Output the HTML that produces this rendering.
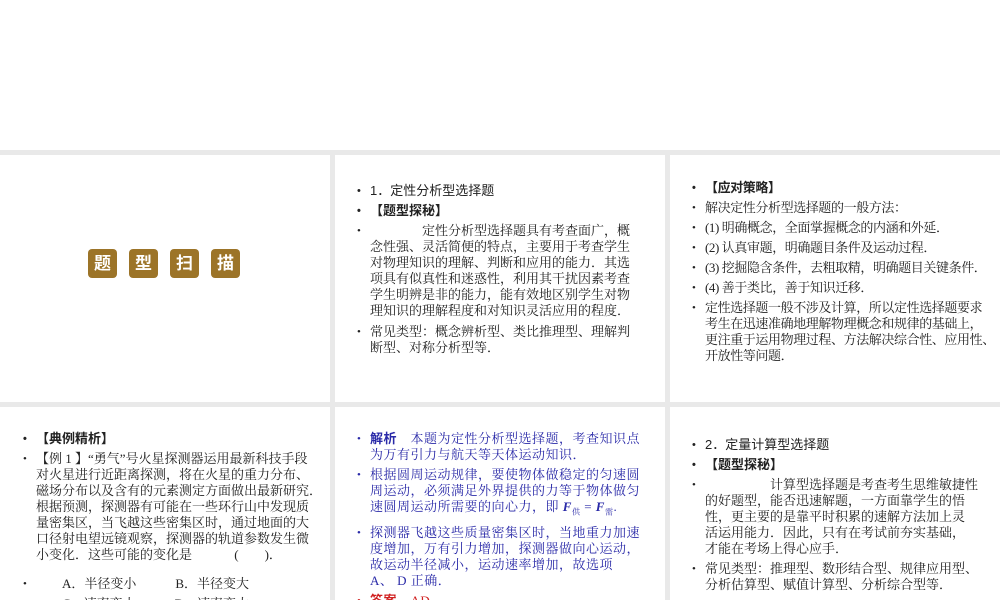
<!DOCTYPE html><html><head><meta charset="utf-8"><style>
body{margin:0;width:1000px;height:600px;background:#e9e9e9;position:relative;overflow:hidden;font-family:"Liberation Serif","Noto Serif CJK SC",serif;font-size:13px;color:#222}
.top{position:absolute;left:0;top:0;width:1000px;height:150px;background:#fff}
.p{position:absolute;background:#fff;overflow:hidden}
ul{list-style:none;margin:0;padding:0;position:absolute}
li{position:relative;padding-left:13px;line-height:16px;margin-bottom:4px}
li:before{content:"•";position:absolute;left:0;top:0;font-size:11px}
.b{font-family:"Liberation Sans","Noto Sans CJK SC",sans-serif}
.t{position:absolute;top:94px;width:29px;height:29px;background:#9c7428;border-radius:4px;color:#fff;font-weight:bold;font-size:17px;text-align:center;line-height:29px;font-family:"Liberation Sans","Noto Sans CJK SC",sans-serif}
.blue{color:#2a2aa8}.red{color:#d02020}
</style></head><body>
<div class="top"></div>
<div class="p" style="left:0;top:155px;width:330px;height:247px">
<div class="t" style="left:88px">题</div><div class="t" style="left:129px">型</div><div class="t" style="left:170px">扫</div><div class="t" style="left:211px">描</div>
</div>
<div class="p" style="left:335px;top:155px;width:330px;height:247px">
<ul style="left:22px;top:28px;width:290px">
<li class="b">1．定性分析型选择题</li>
<li class="b" style="font-weight:bold">【题型探秘】</li>
<li style="margin-bottom:5px">&emsp;&emsp;&emsp;&emsp;定性分析型选择题具有考查面广，概<br>念性强、灵活简便的特点，主要用于考查学生<br>对物理知识的理解、判断和应用的能力．其选<br>项具有似真性和迷惑性，利用其干扰因素考查<br>学生明辨是非的能力，能有效地区别学生对物<br>理知识的理解程度和对知识灵活应用的程度．</li>
<li>常见类型：概念辨析型、类比推理型、理解判<br>断型、对称分析型等．</li>
</ul></div>
<div class="p" style="left:670px;top:155px;width:330px;height:247px">
<ul style="left:22px;top:25px;width:310px;letter-spacing:-0.4px">
<li class="b" style="font-weight:bold">【应对策略】</li>
<li>解决定性分析型选择题的一般方法：</li>
<li>(1) 明确概念，全面掌握概念的内涵和外延．</li>
<li>(2) 认真审题，明确题目条件及运动过程．</li>
<li style="white-space:nowrap">(3) 挖掘隐含条件，去粗取精，明确题目关键条件．</li>
<li>(4) 善于类比，善于知识迁移．</li>
<li style="white-space:nowrap">定性选择题一般不涉及计算，所以定性选择题要求<br>考生在迅速准确地理解物理概念和规律的基础上，<br>更注重于运用物理过程、方法解决综合性、应用性、<br>开放性等问题．</li>
</ul></div>
<div class="p" style="left:0;top:407px;width:330px;height:193px">
<ul style="left:23px;top:24px;width:300px;white-space:nowrap">
<li class="b" style="font-weight:bold">【典例精析】</li>
<li style="margin-bottom:13px">【例 1 】“勇气”号火星探测器运用最新科技手段<br>对火星进行近距离探测，将在火星的重力分布、<br>磁场分布以及含有的元素测定方面做出最新研究．<br>根据预测，探测器有可能在一些环行山中发现质<br>量密集区，当飞越这些密集区时，通过地面的大<br>口径射电望远镜观察，探测器的轨道参数发生微<br>小变化．这些可能的变化是&emsp;&emsp;&emsp;&nbsp;(&emsp;&emsp;)．</li>
<li>&emsp;&emsp;A．半径变小&emsp;&emsp;&emsp;B．半径变大</li>
<li>&emsp;&emsp;C．速率变小&emsp;&emsp;&emsp;D．速率变大</li>
</ul></div>
<div class="p" style="left:335px;top:407px;width:330px;height:193px">
<ul style="left:22px;top:24px;width:300px;letter-spacing:0.5px;white-space:nowrap" class="blue">
<li><b class="b">解析</b>&emsp;本题为定性分析型选择题，考查知识点<br>为万有引力与航天等天体运动知识．</li>
<li>根据圆周运动规律，要使物体做稳定的匀速圆<br>周运动，必须满足外界提供的力等于物体做匀<br>速圆周运动所需要的向心力，即 <i><b>F</b></i><sub style="font-size:8px">供</sub> = <i><b>F</b></i><sub style="font-size:8px">需</sub>.</li>
<li>探测器飞越这些质量密集区时，当地重力加速<br>度增加，万有引力增加，探测器做向心运动，<br>故运动半径减小，运动速率增加，故选项<br>A、 D 正确．</li>
<li class="red"><b class="b">答案</b>&emsp;AD</li>
</ul></div>
<div class="p" style="left:670px;top:407px;width:330px;height:193px">
<ul style="left:22px;top:30px;width:300px;white-space:nowrap">
<li class="b">2．定量计算型选择题</li>
<li class="b" style="font-weight:bold">【题型探秘】</li>
<li>&emsp;&emsp;&emsp;&emsp;&emsp;计算型选择题是考查考生思维敏捷性<br>的好题型，能否迅速解题，一方面靠学生的悟<br>性，更主要的是靠平时积累的速解方法加上灵<br>活运用能力．因此，只有在考试前夯实基础，<br>才能在考场上得心应手．</li>
<li>常见类型：推理型、数形结合型、规律应用型、<br>分析估算型、赋值计算型、分析综合型等．</li>
</ul></div>
</body></html>
